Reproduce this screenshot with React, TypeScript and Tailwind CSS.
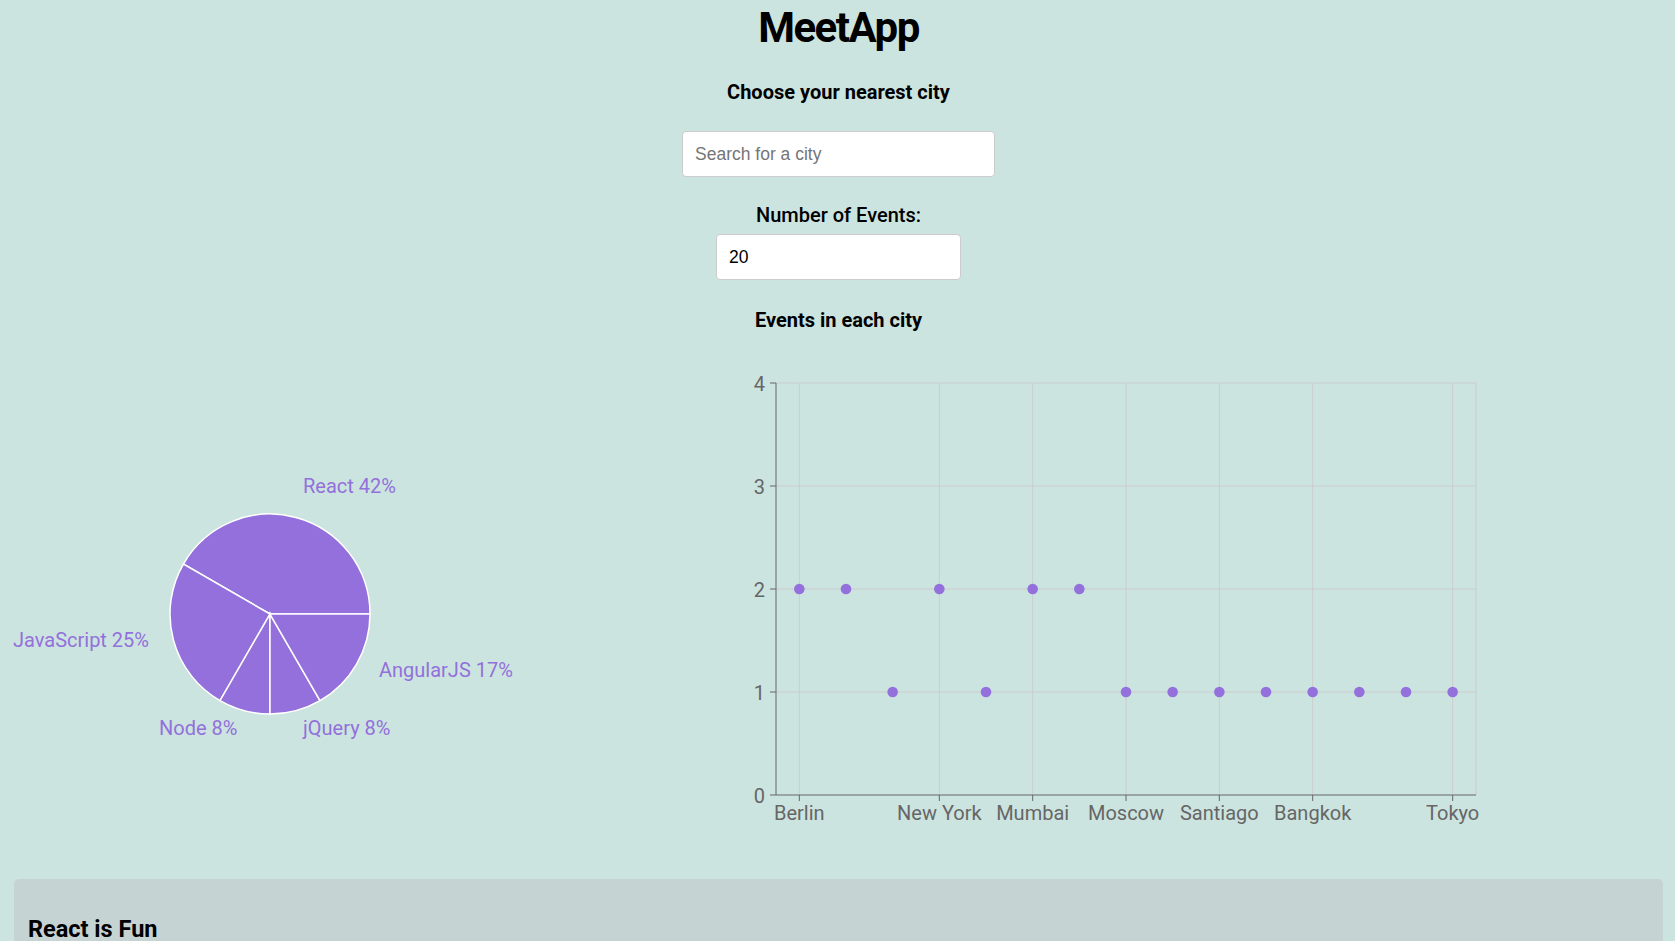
import React from 'react';

const PURPLE = '#9370db';

// pie data, recharts-style angles (0 = 3 o'clock, counter-clockwise)
const slices = [
  { name: 'React', value: 5 },
  { name: 'JavaScript', value: 3 },
  { name: 'Node', value: 1 },
  { name: 'jQuery', value: 1 },
  { name: 'AngularJS', value: 2 },
];

const pieLabels = [
  { text: 'React 42%', x: 303, y: 153, anchor: 'start' },
  { text: 'JavaScript 25%', x: 149, y: 307, anchor: 'end' },
  { text: 'AngularJS 17%', x: 379, y: 337, anchor: 'start' },
  { text: 'Node 8%', x: 237.5, y: 395, anchor: 'end' },
  { text: 'jQuery 8%', x: 303, y: 395, anchor: 'start' },
];

const cities = [
  { city: 'Berlin', count: 2 },
  { city: 'London', count: 2 },
  { city: 'Paris', count: 1 },
  { city: 'New York', count: 2 },
  { city: 'Dubai', count: 1 },
  { city: 'Mumbai', count: 2 },
  { city: 'Delhi', count: 2 },
  { city: 'Moscow', count: 1 },
  { city: 'Cairo', count: 1 },
  { city: 'Santiago', count: 1 },
  { city: 'Lima', count: 1 },
  { city: 'Bangkok', count: 1 },
  { city: 'Seoul', count: 1 },
  { city: 'Sydney', count: 1 },
  { city: 'Tokyo', count: 1 },
];
const shownTicks = [0, 3, 5, 7, 9, 11, 14];

const PieChartBox = () => {
  const cx = 270;
  const cy = 274;
  const r = 100;
  const total = slices.reduce((s, d) => s + d.value, 0);
  let start = 0;
  const pt = (deg: number) => {
    const a = (deg * Math.PI) / 180;
    return [cx + r * Math.cos(a), cy - r * Math.sin(a)];
  };
  return (
    <svg width={560} height={520} className="shrink-0">
      {slices.map((s) => {
        const sweep = (s.value / total) * 360;
        const [x1, y1] = pt(start);
        const [x2, y2] = pt(start + sweep);
        const large = sweep > 180 ? 1 : 0;
        start += sweep;
        return (
          <path
            key={s.name}
            d={`M${cx},${cy} L${x1},${y1} A${r},${r} 0 ${large} 0 ${x2},${y2} Z`}
            fill={PURPLE}
            stroke="#fff"
            strokeWidth={1.5}
          />
        );
      })}
      {pieLabels.map((l) => (
        <text
          key={l.text}
          x={l.x}
          y={l.y}
          textAnchor={l.anchor as 'start' | 'end'}
          fill={PURPLE}
          fontSize={20}
        >
          {l.text}
        </text>
      ))}
    </svg>
  );
};

const ScatterChartBox = () => {
  const left = 76;
  const right = 776;
  const top = 43;
  const bottom = 455;
  const band = (right - left) / cities.length;
  const xOf = (i: number) => left + band * (i + 0.5);
  const yOf = (v: number) => bottom - ((bottom - top) / 4) * v;
  return (
    <svg width={820} height={520} className="shrink-0">
      {/* grid */}
      {[1, 2, 3, 4].map((v) => (
        <line key={v} x1={left} x2={right} y1={yOf(v)} y2={yOf(v)} stroke="#ccc" />
      ))}
      {shownTicks.map((i) => (
        <line key={i} x1={xOf(i)} x2={xOf(i)} y1={top} y2={bottom} stroke="#ccc" />
      ))}
      <line x1={right} x2={right} y1={top} y2={bottom} stroke="#ccc" />

      {/* axes */}
      <line x1={left} x2={left} y1={top} y2={bottom} stroke="#666" />
      <line x1={left} x2={right} y1={bottom} y2={bottom} stroke="#666" />
      {[0, 1, 2, 3, 4].map((v) => (
        <g key={v}>
          <line x1={left - 6} x2={left} y1={yOf(v)} y2={yOf(v)} stroke="#666" />
          <text x={65} y={yOf(v) + 7.5} textAnchor="end" fill="#666" fontSize={20}>
            {v}
          </text>
        </g>
      ))}
      {shownTicks.map((i) => (
        <g key={i}>
          <line x1={xOf(i)} x2={xOf(i)} y1={bottom} y2={bottom + 6} stroke="#666" />
          <text x={xOf(i)} y={480} textAnchor="middle" fill="#666" fontSize={20}>
            {cities[i].city}
          </text>
        </g>
      ))}

      {/* points */}
      {cities.map((c, i) => (
        <circle key={c.city} cx={xOf(i)} cy={yOf(c.count)} r={5.3} fill={PURPLE} />
      ))}
    </svg>
  );
};

export default function App() {
  return (
    <div className="min-h-screen bg-[#cce4e0] text-black font-['Roboto',sans-serif] overflow-hidden">
      <div className="flex flex-col items-center pl-[2px]">
        <h1 className="mt-[7px] text-[42px] leading-[42px] font-bold tracking-[-1.5px]">MeetApp</h1>
        <h3 className="mt-[31px] text-[20px] leading-[24px] font-bold">Choose your nearest city</h3>
        <input
          type="text"
          placeholder="Search for a city"
          className="mt-[27px] w-[313px] h-[46px] rounded-[4px] border border-[#ccc] bg-white px-3 text-[17.5px] font-['Liberation_Sans',Arial,sans-serif] outline-none placeholder:text-[#757575]"
        />
        <label className="mt-[26px] text-[20px] leading-[24px] font-medium">Number of Events:</label>
        <input
          type="number"
          defaultValue={20}
          className="mt-[7px] w-[245px] h-[46px] rounded-[4px] border border-[#ccc] bg-white px-3 text-[17.5px] font-['Liberation_Sans',Arial,sans-serif] outline-none"
        />
        <h4 className="mt-[28px] text-[20px] leading-[24px] font-bold">Events in each city</h4>
      </div>

      <div className="mt-[8px] flex">
        <PieChartBox />
        <div className="ml-[140px]">
          <ScatterChartBox />
        </div>
      </div>

      <div className="mt-[19px] ml-[14px] mr-[12px] h-[200px] rounded-[5px] bg-[#c6d3d3] pl-[14px] pt-[36px]">
        <h2 className="text-[23.5px] leading-[28px] font-bold">React is Fun</h2>
      </div>
    </div>
  );
}
